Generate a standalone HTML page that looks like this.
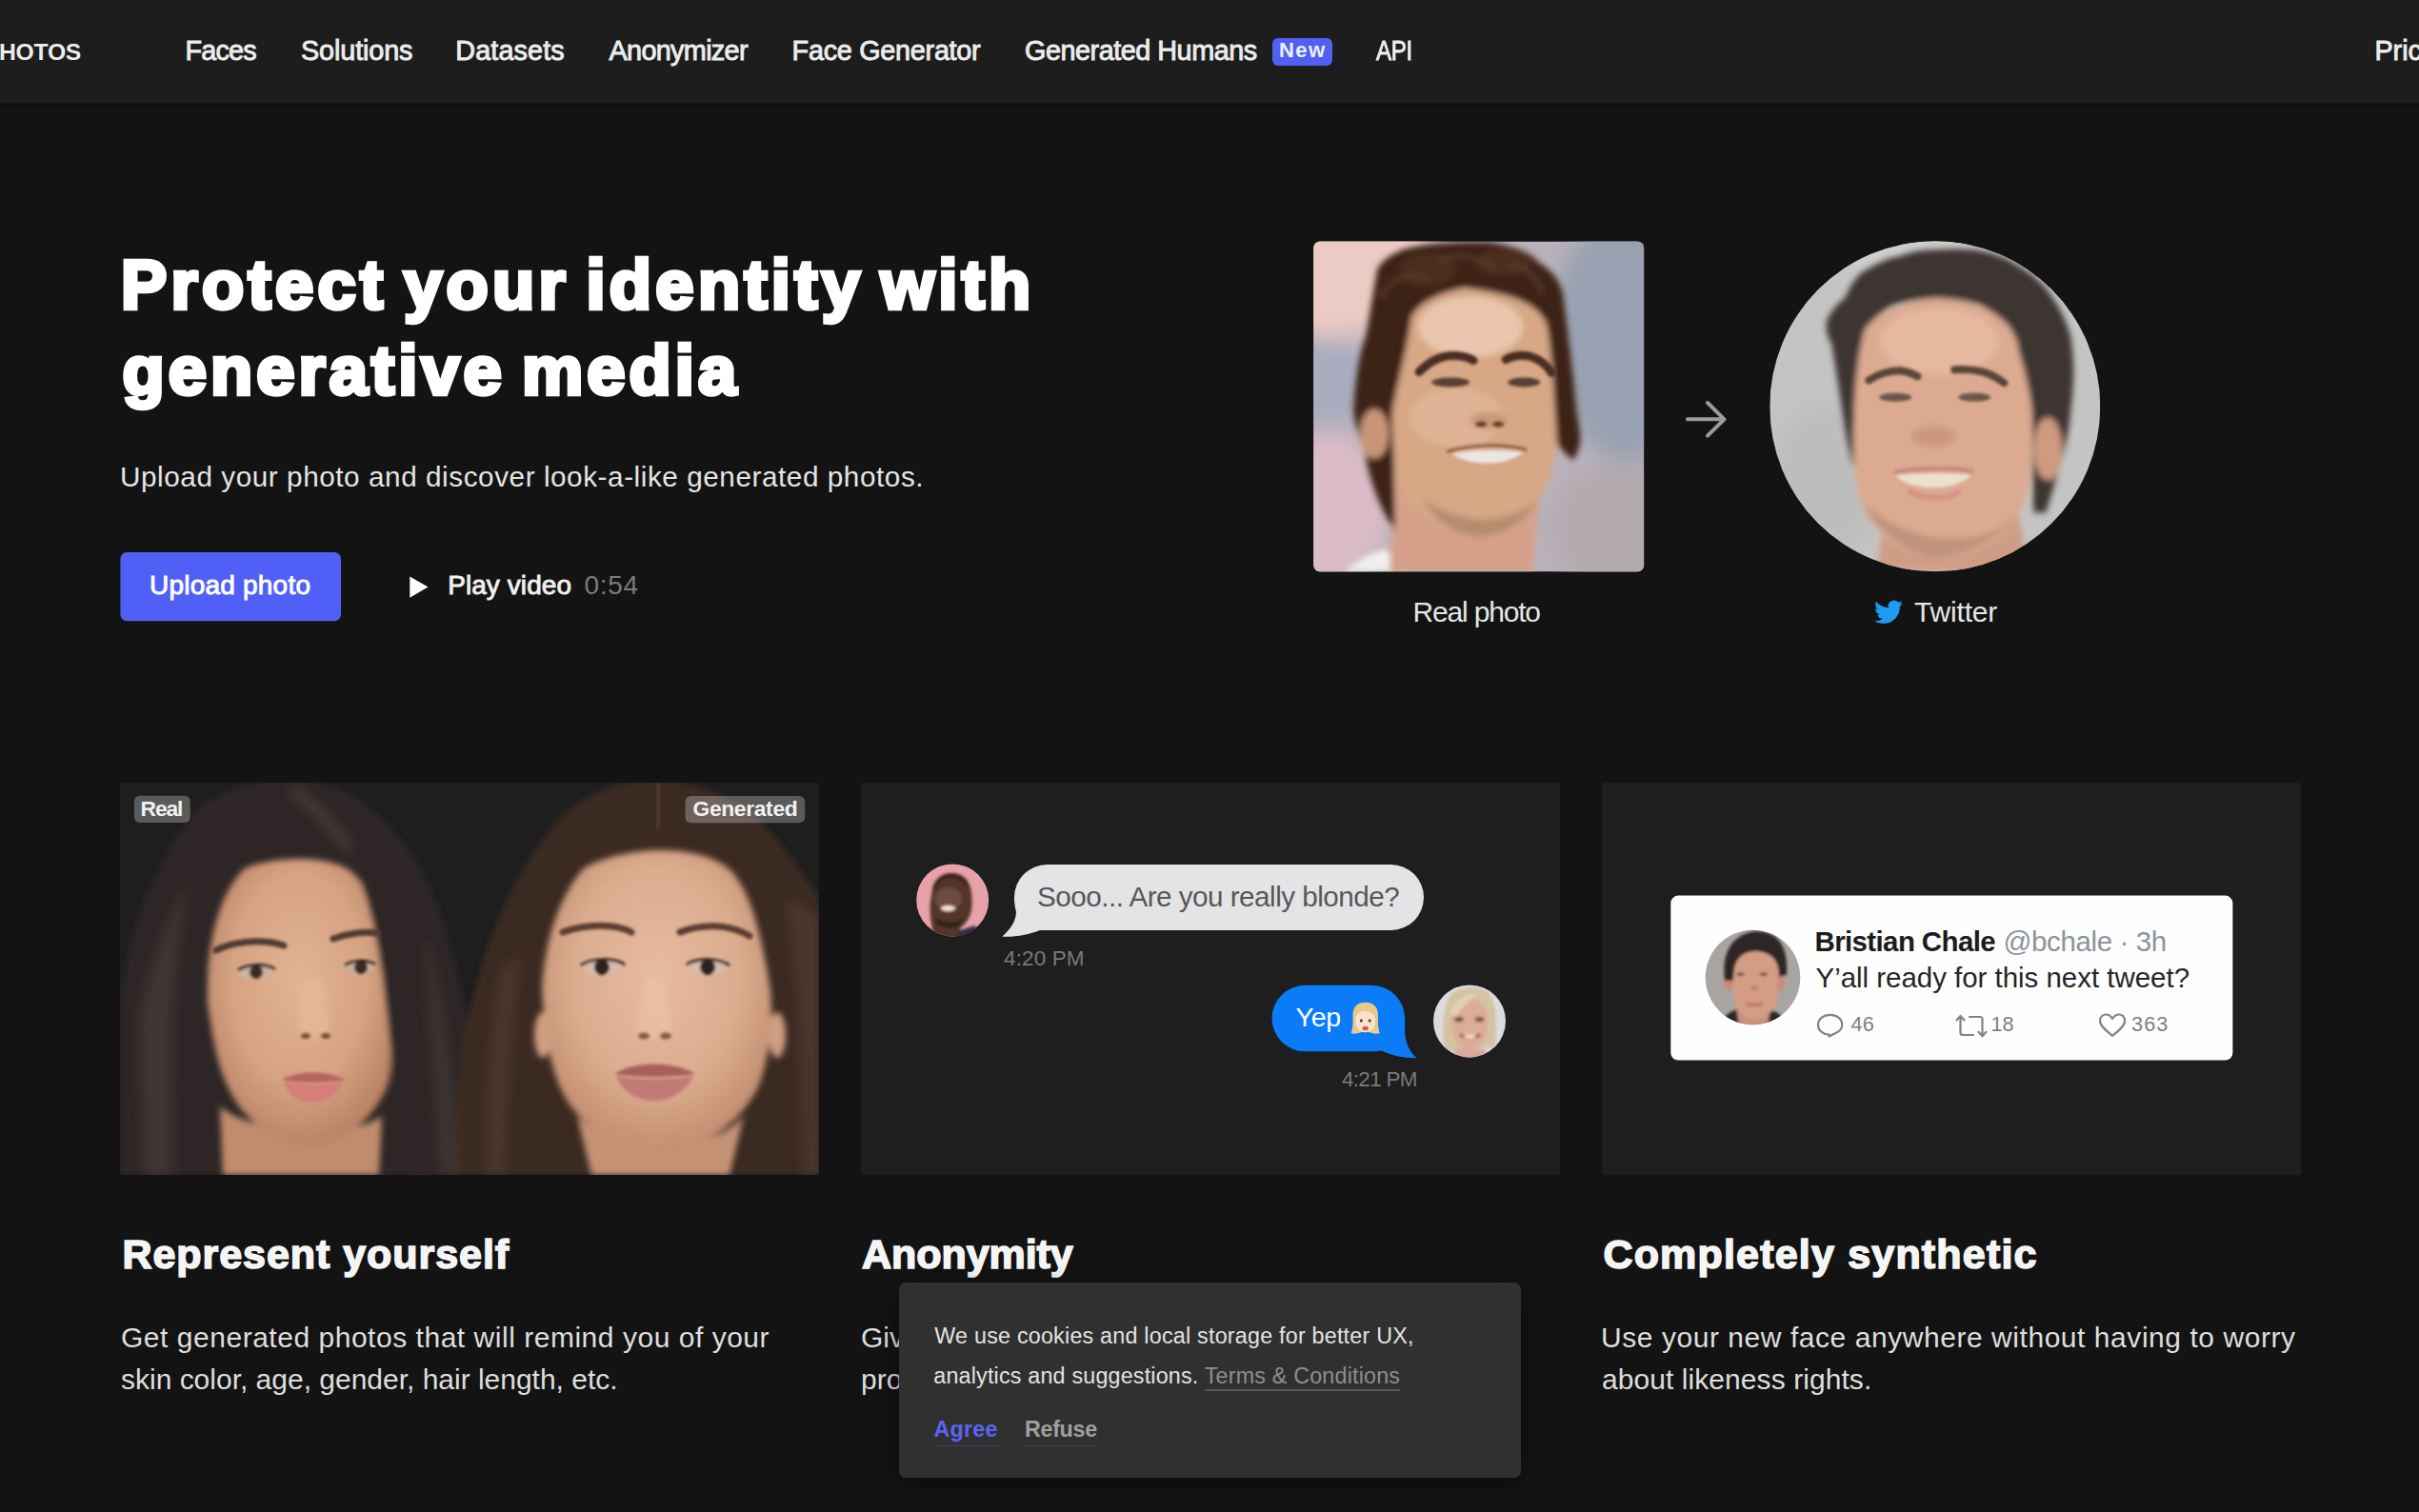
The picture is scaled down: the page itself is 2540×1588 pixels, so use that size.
<!DOCTYPE html>
<html><head><meta charset="utf-8">
<style>
html,body{margin:0;padding:0;}
body{width:2540px;height:1588px;overflow:hidden;background:#131313;position:relative;font-family:"Liberation Sans",sans-serif;}
.t{position:absolute;white-space:nowrap;line-height:1;z-index:5;}
#bg{position:absolute;left:0;top:0;z-index:1;}
</style></head>
<body>
<svg id="bg" width="2540" height="1588" viewBox="0 0 2540 1588">
<defs>
 <filter id="b1" x="-20%" y="-20%" width="140%" height="140%"><feGaussianBlur stdDeviation="1.5"/></filter>
 <filter id="b3" x="-20%" y="-20%" width="140%" height="140%"><feGaussianBlur stdDeviation="3"/></filter>
 <filter id="b6" x="-30%" y="-30%" width="160%" height="160%"><feGaussianBlur stdDeviation="6"/></filter>
 <filter id="b12" x="-50%" y="-50%" width="200%" height="200%"><feGaussianBlur stdDeviation="12"/></filter>
 <linearGradient id="navsh" x1="0" y1="0" x2="0" y2="1"><stop offset="0" stop-color="#000" stop-opacity=".18"/><stop offset="1" stop-color="#000" stop-opacity="0"/></linearGradient>
 <clipPath id="cpReal"><rect x="0" y="0" width="347" height="347" rx="7"/></clipPath>
 <clipPath id="cpTw"><circle cx="173.5" cy="173.5" r="173.5"/></clipPath>
 <clipPath id="cpC1"><rect x="0" y="0" width="734" height="412" rx="3"/></clipPath>
 <linearGradient id="realbg" x1="0" y1="0" x2="1" y2="0.3">
  <stop offset="0" stop-color="#e6c9c6"/><stop offset="0.45" stop-color="#b9b0bb"/><stop offset="1" stop-color="#9ea3b0"/>
 </linearGradient>
 <radialGradient id="twbg" cx="0.5" cy="0.3" r="0.8"><stop offset="0" stop-color="#c9c9c9"/><stop offset="1" stop-color="#b4b4b4"/></radialGradient>
</defs>
<!-- nav -->
<rect x="0" y="0" width="2540" height="108" fill="#1d1d1d"/>
<rect x="0" y="108" width="2540" height="7" fill="url(#navsh)"/>
<!-- New badge -->
<rect x="1336" y="40" width="63" height="29" rx="6" fill="#5060f2"/>
<!-- upload button -->
<rect x="126.4" y="580" width="231.6" height="72.3" rx="7" fill="#5060f6"/>
<!-- play icon -->
<path d="M430.3 605.4 L449.5 616.5 L430.3 627.7 Z" fill="#ffffff"/>

<!-- REAL PHOTO -->
<g transform="translate(1379.2,253.5)" clip-path="url(#cpReal)">
 <rect width="347" height="347" fill="#b9b2bc"/>
 <g filter="url(#b12)">
  <ellipse cx="20" cy="20" rx="110" ry="80" fill="#eccbc4"/>
  <ellipse cx="10" cy="150" rx="60" ry="45" fill="#a9abbf"/>
  <ellipse cx="10" cy="280" rx="70" ry="80" fill="#dcbcc8"/>
  <ellipse cx="330" cy="100" rx="80" ry="130" fill="#98a0b1"/>
  <ellipse cx="320" cy="300" rx="70" ry="70" fill="#b3aaae"/>
 </g>
 <g filter="url(#b3)">
  <path d="M33 347 C45 335 60 328 75 323 L95 347 Z" fill="#f2f0ef"/>
  <path d="M84 240 L240 240 L230 347 L80 347 Z" fill="#d6a08a"/>
  <path d="M89 11 C100 4 140 0 186 1 C210 5 230 12 236 22 C250 30 258 40 262 55 C266 90 272 130 276 177 C280 200 284 215 272 230 L255 213 C252 160 250 110 244 86 C235 66 210 55 158 49 C130 55 110 65 103 80 C98 115 92 145 89 160 C84 190 84 240 86 303 C75 290 60 260 54 222 C46 200 42 185 42 177 C44 140 50 110 55 100 C60 70 64 45 67 29 C72 20 80 15 89 11 Z" fill="#3c2417"/>
  <path d="M103 80 C110 65 130 55 158 49 C210 55 235 66 244 86 C250 110 252 160 256 213 C250 245 245 262 237 270 C225 290 200 306 172 309 C140 306 120 295 115 285 C100 275 90 262 86 256 C84 220 82 190 83 177 C88 150 98 115 103 80 Z" fill="#d7a786"/>
  <ellipse cx="165" cy="90" rx="55" ry="32" fill="#e9c6ad"/>
  <ellipse cx="120" cy="30" rx="30" ry="18" fill="#4e3222" fill-opacity=".8"/>
  <ellipse cx="200" cy="22" rx="30" ry="14" fill="#523424" fill-opacity=".7"/>
  <path d="M70 60 C80 40 100 30 120 40 M130 20 C150 12 175 15 190 30 M205 25 C220 25 235 35 240 55" stroke="#5e4030" stroke-width="5" fill="none" stroke-opacity=".7"/>
  <ellipse cx="150" cy="185" rx="50" ry="30" fill="#e2b99c" fill-opacity=".7"/>
  <ellipse cx="64" cy="202" rx="15" ry="26" fill="#c99577"/>
  <path d="M115 270 C130 300 160 312 180 310 C205 306 225 290 236 270 C220 285 200 292 175 292 C150 290 130 282 115 270 Z" fill="#9f7a62" fill-opacity=".6"/>
  <ellipse cx="184" cy="188" rx="20" ry="9" fill="#c4906f" fill-opacity=".8"/>
 </g>
 <g filter="url(#b1)">
  <path d="M111 137 C122 126 135 120 146 120 C155 120 163 122 168 125" stroke="#4a2e20" stroke-width="9" fill="none" stroke-linecap="round"/>
  <path d="M202 124 C210 120 220 119 228 121 C238 124 245 130 250 138" stroke="#4a2e20" stroke-width="9" fill="none" stroke-linecap="round"/>
  <ellipse cx="144" cy="148" rx="20" ry="5" fill="#5a4034"/>
  <ellipse cx="221" cy="148" rx="17" ry="5" fill="#5a4034"/>
  <ellipse cx="176" cy="192" rx="6" ry="3" fill="#6a4030"/><ellipse cx="194" cy="192" rx="6" ry="3" fill="#6a4030"/>
  <path d="M146 223 C165 219 200 218 220 222 C210 230 195 233 182 233 C167 233 153 229 146 223 Z" fill="#ece6e2"/>
  <path d="M140 221 C165 213 200 212 224 219" stroke="#8a5a48" stroke-width="3" fill="none"/>
 </g>
</g>
<!-- arrow -->
<path d="M1772 440.3 H1810 M1793 423 L1810.5 440.3 L1793 457.6" stroke="#9c9c9c" stroke-width="4" fill="none" stroke-linecap="round" stroke-linejoin="round"/>
<!-- TWITTER PHOTO -->
<g transform="translate(1858.3,253.3)" clip-path="url(#cpTw)">
 <rect width="347" height="347" fill="#c4c4c4"/>
 <g filter="url(#b12)"><ellipse cx="60" cy="250" rx="60" ry="80" fill="#bdbdbd"/><ellipse cx="170" cy="20" rx="90" ry="30" fill="#cfcfcf"/></g>
 <g filter="url(#b3)">
  <path d="M118 305 L262 290 L272 347 L112 347 Z" fill="#d09c86"/>
  <path d="M60 83 C66 70 75 62 79 60 C85 45 92 36 98 32 C115 22 125 17 136 16 C150 10 162 9 172 9 C190 8 205 8 215 9 C235 12 250 18 258 24 C275 34 288 45 294 55 C305 70 312 85 316 100 C320 125 320 150 316 177 C315 210 300 250 290 285 L277 285 C276 250 276 200 275 177 C272 150 265 130 261 115 C255 100 245 85 222 67 C200 62 185 60 172 60 C150 62 130 65 122 72 C110 80 104 88 100 93 C95 110 92 130 89 177 C88 200 88 220 89 240 C84 225 80 205 76 177 C72 150 67 120 65 108 C60 100 58 90 60 83 Z" fill="#3d3532"/>
  <path d="M100 93 C110 80 130 65 172 60 C200 60 230 66 251 89 C258 100 262 110 261 115 C268 135 273 160 275 177 C276 200 275 230 273 256 C268 275 262 285 258 292 C245 310 230 320 222 321 C205 330 190 332 172 332 C150 330 132 322 122 313 C110 300 104 292 100 285 C95 270 90 255 89 242 C88 220 88 200 89 177 C90 140 95 110 100 93 Z" fill="#dcaa91"/>
  <ellipse cx="178" cy="105" rx="62" ry="35" fill="#e5b8a0"/>
  <ellipse cx="292" cy="218" rx="15" ry="33" fill="#cf9a80"/>
  <path d="M100 275 C110 300 135 325 172 332 C215 330 250 305 262 280 C250 300 225 312 200 312 C170 314 130 305 100 275 Z" fill="#a7806c" fill-opacity=".55"/>
  <ellipse cx="172" cy="205" rx="24" ry="11" fill="#c58e75" fill-opacity=".7"/>
 </g>
 <g filter="url(#b1)">
  <path d="M104 146 C115 139 126 136 137 136 C145 137 150 139 155 142" stroke="#5a4438" stroke-width="8" fill="none" stroke-linecap="round"/>
  <path d="M194 135 C205 134 215 135 223 137 C233 140 240 144 246 149" stroke="#5a4438" stroke-width="8" fill="none" stroke-linecap="round"/>
  <ellipse cx="132" cy="164" rx="17" ry="4.5" fill="#6e5548"/>
  <ellipse cx="215" cy="164" rx="17" ry="4.5" fill="#6e5548"/>
  <path d="M130 243 C150 238 195 237 214 242" stroke="#c98c7e" stroke-width="5" fill="none"/>
  <path d="M132 246 C160 243 195 243 212 246 C200 256 185 259 172 259 C155 259 140 255 132 246 Z" fill="#ede0cc"/>
  <path d="M145 262 C160 272 190 272 200 262" stroke="#d39488" stroke-width="6" fill="none"/>
 </g>
</g>
<!-- twitter bird -->
<g transform="translate(1968,627.8) scale(1.25)">
 <path fill="#1d9bf0" d="M23.953 4.57a10 10 0 01-2.825.775 4.958 4.958 0 002.163-2.723c-.951.555-2.005.959-3.127 1.184a4.920 4.920 0 00-8.384 4.482C7.690 8.095 4.067 6.130 1.640 3.162a4.822 4.822 0 00-.666 2.475c0 1.710.870 3.213 2.188 4.096a4.904 4.904 0 01-2.228-.616v.060a4.923 4.923 0 003.946 4.827 4.996 4.996 0 01-2.212.085 4.936 4.936 0 004.604 3.417 9.867 9.867 0 01-6.102 2.105c-.390 0-.779-.023-1.170-.067a13.995 13.995 0 007.557 2.209c9.053 0 13.998-7.496 13.998-13.985 0-.210 0-.420-.015-.630A9.935 9.935 0 0024 4.590z"/>
</g>

<!-- CARD 1 -->
<g transform="translate(126,822)" clip-path="url(#cpC1)">
 <rect width="734" height="412" fill="#1e1e1e"/>
 <defs>
  <radialGradient id="skL" cx="0.5" cy="0.42" r="0.6"><stop offset="0" stop-color="#e2b394"/><stop offset="0.6" stop-color="#d6a384"/><stop offset="1" stop-color="#b98064"/></radialGradient>
  <radialGradient id="skR" cx="0.5" cy="0.42" r="0.6"><stop offset="0" stop-color="#e6bb9f"/><stop offset="0.6" stop-color="#dcac8f"/><stop offset="1" stop-color="#c08a6e"/></radialGradient>
 </defs>
 <g filter="url(#b3)">
  <path d="M0 412 L0 231 C10 160 30 90 82 27 C110 5 150 -5 190 -3 C240 0 290 40 320 100 C345 150 362 220 370 300 C374 350 378 390 379 412 Z" fill="#2f2826"/>
  <path d="M350 412 C352 330 358 260 370 230 C385 160 420 80 470 30 C500 5 540 -5 566 -3 C610 0 650 15 690 60 C715 90 734 122 734 122 L734 412 Z" fill="#3a2a23"/>
 </g>
 <g filter="url(#b6)">
  <path d="M20 250 C30 200 45 150 70 110 C60 170 50 250 55 412 L25 412 Z" fill="#4a403c" fill-opacity=".6"/>
  <path d="M320 160 C340 220 350 300 355 412 L335 412 C330 320 325 240 320 160 Z" fill="#4a403c" fill-opacity=".5"/>
  <path d="M400 200 C390 260 385 330 385 412 L405 412 C405 330 410 260 420 180 Z" fill="#5a443a" fill-opacity=".5"/>
  <path d="M700 120 C712 200 716 300 718 412 L734 412 L734 140 Z" fill="#5a443a" fill-opacity=".5"/>
  <path d="M180 8 C200 20 220 40 240 70" stroke="#5a4c46" stroke-width="10" fill="none" stroke-opacity=".6"/>
 </g>
 <g filter="url(#b3)">
  <path d="M105 340 C140 370 240 375 275 350 L272 412 L108 412 Z" fill="#c08b6e"/>
  <path d="M131 90 C160 78 220 74 245 95 C262 115 270 150 278 218 C284 260 288 300 280 320 C268 350 240 375 204 382 C170 378 145 365 125 340 C108 315 100 290 92 232 C90 180 100 120 131 90 Z" fill="url(#skL)"/>
  <path d="M250 98 C268 140 276 200 282 260 C288 320 295 370 300 412 L330 412 C325 350 310 250 290 160 C280 120 268 100 250 98 Z" fill="#2f2826"/>
  <path d="M480 350 C520 390 620 392 655 350 L640 412 L495 412 Z" fill="#c69276"/>
  <path d="M487 90 C520 70 600 60 639 90 C660 110 672 150 683 218 C686 250 682 290 670 320 C650 360 610 386 566 388 C525 386 490 365 470 335 C455 310 447 280 443 218 C445 170 460 120 487 90 Z" fill="url(#skR)"/>
  <ellipse cx="444" cy="265" rx="9" ry="24" fill="#cf9d80"/>
  <ellipse cx="690" cy="265" rx="9" ry="24" fill="#cf9d80"/>
  <path d="M196 205 C190 230 186 250 188 262 C195 270 212 270 220 262 C222 250 216 230 212 205 Z" fill="#e8bc9c" fill-opacity=".6"/>
  <path d="M552 205 C546 230 542 250 544 262 C551 270 570 270 578 262 C580 250 574 230 568 205 Z" fill="#ecc4a6" fill-opacity=".6"/>
 </g>
 <g filter="url(#b1)">
  <path d="M101 176 C120 166 150 164 172 171" stroke="#4f3a30" stroke-width="7" fill="none" stroke-linecap="round"/>
  <path d="M224 164 C240 158 258 156 270 158" stroke="#4f3a30" stroke-width="7" fill="none" stroke-linecap="round"/>
  <ellipse cx="143" cy="199" rx="19" ry="7" fill="#cdb2a2"/><circle cx="143" cy="199" r="7" fill="#3a2a24"/>
  <path d="M124 197 C135 190 152 190 163 196" stroke="#2a1e1a" stroke-width="3" fill="none"/>
  <ellipse cx="251" cy="194" rx="16" ry="7" fill="#c9ae9e"/><circle cx="253" cy="194" r="7" fill="#3a2a24"/>
  <path d="M236 192 C245 186 258 186 268 191" stroke="#2a1e1a" stroke-width="3" fill="none"/>
  <ellipse cx="195" cy="266" rx="5" ry="3" fill="#7a4a38"/><ellipse cx="216" cy="266" rx="5" ry="3" fill="#7a4a38"/>
  <path d="M170 312 C185 302 220 302 236 312 C220 316 185 316 170 312 Z" fill="#b86460"/>
  <path d="M172 314 C190 318 220 318 234 314 C228 330 212 336 203 336 C190 336 176 330 172 314 Z" fill="#d67e7a"/>
  <path d="M465 157 C490 148 520 148 537 157" stroke="#5a3e32" stroke-width="7" fill="none" stroke-linecap="round"/>
  <path d="M588 157 C610 148 640 148 661 161" stroke="#5a3e32" stroke-width="7" fill="none" stroke-linecap="round"/>
  <ellipse cx="506" cy="194" rx="20" ry="8" fill="#d4bcae"/><circle cx="506" cy="194" r="8" fill="#2e201a"/>
  <path d="M484 192 C495 184 518 184 530 191" stroke="#2a1a14" stroke-width="3" fill="none"/>
  <ellipse cx="617" cy="194" rx="20" ry="8" fill="#d4bcae"/><circle cx="617" cy="194" r="8" fill="#2e201a"/>
  <path d="M595 191 C607 184 628 184 640 192" stroke="#2a1a14" stroke-width="3" fill="none"/>
  <ellipse cx="550" cy="266" rx="6" ry="3.5" fill="#8a5a44"/><ellipse cx="573" cy="266" rx="6" ry="3.5" fill="#8a5a44"/>
  <path d="M519 306 C540 292 582 292 604 306 C580 310 540 310 519 306 Z" fill="#a85e5c"/>
  <path d="M521 308 C540 312 582 312 602 308 C595 326 575 334 561 334 C545 334 527 326 521 308 Z" fill="#c27a76"/>
  <path d="M565 0 V48" stroke="#7a5c4c" stroke-width="2" stroke-opacity=".6"/>
 </g>
 <rect x="14.9" y="13.8" width="58.9" height="28.2" rx="6" fill="#ffffff" fill-opacity="0.27"/>
 <rect x="593.6" y="14.1" width="125.6" height="28.1" rx="6" fill="#ffffff" fill-opacity="0.27"/>
</g>

<!-- CARD 2 -->
<g transform="translate(904,822)">
 <rect width="734" height="412" rx="3" fill="#1e1e1e"/>
</g>
<!-- grey bubble -->
<path d="M1099.5 908 H1460.5 A34.5 34.5 0 0 1 1460.5 977 H1092 C1080 981.5 1066 984.5 1052.3 983.7 C1061 976 1066.5 968 1067 958 C1065.5 952 1065 947 1065 942.5 A34.5 34.5 0 0 1 1099.5 908 Z" fill="#e4e4e6"/>
<!-- blue bubble -->
<path d="M1370.3 1034.8 H1440.3 A34.75 34.75 0 0 1 1475.1 1069.5 V1084 C1475.6 1095 1480 1105 1487.8 1111.2 C1474 1111.5 1461 1108.5 1451 1103.5 C1448 1104 1445 1104.3 1440.3 1104.3 H1370.3 A34.75 34.75 0 0 1 1370.3 1034.8 Z" fill="#0b7bf8"/>
<!-- emoji -->
<g>
 <path d="M1418.5 1085 C1421 1080 1420.5 1072 1420.5 1066 C1420.5 1057 1426 1052.8 1433.7 1052.8 C1441.5 1052.8 1447 1057 1447 1066 C1447 1072 1446.5 1080 1449 1085 C1444 1086.5 1440 1085 1437 1084 L1430 1084 C1427 1085 1423 1086.5 1418.5 1085 Z" fill="#e6c98c"/>
 <ellipse cx="1433.7" cy="1072.5" rx="10.5" ry="11.8" fill="#f9e2cc"/>
 <path d="M1423 1068 C1423 1059 1428 1056.5 1433.7 1056.5 C1440 1056.5 1445 1060 1444.5 1068 C1440 1063 1436 1061 1430 1062 C1427 1063 1425 1065 1423 1068 Z" fill="#e6c98c"/>
 <ellipse cx="1429.3" cy="1072" rx="1.5" ry="1.8" fill="#5a4030"/><ellipse cx="1438.2" cy="1072" rx="1.5" ry="1.8" fill="#5a4030"/>
 <ellipse cx="1433.7" cy="1080" rx="3.2" ry="2.3" fill="#d95a40"/>
</g>
<!-- avatar 1 -->
<g>
 <clipPath id="cpA1"><circle cx="1000.2" cy="945.4" r="38"/></clipPath>
 <g clip-path="url(#cpA1)">
  <rect x="960" y="905" width="82" height="82" fill="#e9a1a9"/>
  <g filter="url(#b1)">
  <path d="M979 975 C975 960 975 935 986 924 C994 916 1008 915 1015 924 C1021 932 1022 950 1019 960 C1016 968 1012 972 1008 975 L1010 990 L980 990 Z" fill="#53352b"/>
  <ellipse cx="996" cy="944" rx="14" ry="12" fill="#6e4c40"/>
  <path d="M983 962 C988 970 1002 972 1011 964 L1008 972 C1000 976 990 975 983 970 Z" fill="#2e2019"/>
  <ellipse cx="995.5" cy="954" rx="7.5" ry="3" fill="#f3e4da"/>
  <path d="M1006 978 L1024 972 L1030 990 L1004 990 Z" fill="#2a2c44"/>
  <path d="M979 940 C978 928 985 918 998 917 C1010 917 1018 925 1020 940 C1016 928 1008 922 998 922 C988 922 982 930 979 940 Z" fill="#3e241c"/>
  </g>
 </g>
</g>
<!-- avatar 2 -->
<g>
 <clipPath id="cpA2"><circle cx="1543" cy="1072.4" r="38"/></clipPath>
 <g clip-path="url(#cpA2)">
  <rect x="1500" y="1030" width="86" height="86" fill="#dcdce0"/>
  <g filter="url(#b1)">
  <path d="M1517 1104 C1514 1085 1514 1055 1525 1043 C1535 1036 1552 1035 1562 1042 C1572 1052 1572 1080 1570 1100 Z" fill="#d4c2a2"/>
  <path d="M1524 1070 C1524 1060 1530 1050 1543 1049 C1556 1049 1562 1060 1562 1072 C1562 1090 1556 1102 1543 1103 C1530 1102 1524 1090 1524 1070 Z" fill="#dcad97"/>
  <path d="M1522 1064 C1526 1050 1540 1042 1553 1043 C1546 1048 1536 1056 1528 1068 Z" fill="#e0d0b2"/>
  <ellipse cx="1532" cy="1070.6" rx="5" ry="2.8" fill="#7a5a48"/>
  <ellipse cx="1553.5" cy="1070.6" rx="5" ry="2.8" fill="#7a5a48"/>
  <path d="M1533 1086 C1538 1092 1549 1092 1554 1086" stroke="#9a5a50" stroke-width="3" fill="none"/>
  <ellipse cx="1543.5" cy="1089" rx="6" ry="2.5" fill="#f0d8c8"/>
  <rect x="1527" y="1102" width="33" height="12" fill="#d9a9a0"/>
  </g>
 </g>
</g>
<!-- CARD 3 -->
<g transform="translate(1682,822)">
 <rect width="734" height="412" rx="3" fill="#1e1e1e"/>
</g>
<!-- tweet card -->
<rect x="1754.3" y="940.6" width="590.1" height="173" rx="8" fill="#fefefe"/>
<g>
 <clipPath id="cpA3"><circle cx="1840.5" cy="1026.5" r="49.8"/></clipPath>
 <g clip-path="url(#cpA3)">
  <rect x="1788" y="974" width="106" height="106" fill="#a9a5a3"/>
  <g filter="url(#b1)">
  <path d="M1806 1080 C1808 1068 1816 1062 1825 1060 L1856 1060 C1866 1062 1874 1068 1878 1080 Z" fill="#2a2625"/>
  <path d="M1822 1050 L1860 1050 L1856 1078 L1826 1078 Z" fill="#c99080"/>
  <path d="M1819 1010 C1819 1000 1828 994 1843 994 C1858 994 1868 1002 1868 1012 L1867 1046 C1864 1062 1855 1070 1843 1070 C1831 1070 1822 1062 1820 1046 Z" fill="#d49b85"/>
  <ellipse cx="1815" cy="1032" rx="5" ry="9" fill="#c98c78"/>
  <ellipse cx="1870" cy="1032" rx="4" ry="9" fill="#c98c78"/>
  <path d="M1811 1030 C1808 1005 1815 982 1843 978 C1866 978 1878 992 1876 1024 L1868 1026 C1868 1010 1862 1000 1843 999 C1828 1000 1820 1008 1820 1030 Z" fill="#2d2826"/>
  <ellipse cx="1827.5" cy="1023" rx="4" ry="1.6" fill="#4a3028"/>
  <ellipse cx="1852" cy="1023" rx="4" ry="1.6" fill="#4a3028"/>
  <path d="M1833 1054 C1838 1056 1846 1056 1851 1054" stroke="#a86a5a" stroke-width="2" fill="none"/>
  <ellipse cx="1842" cy="1038" rx="4" ry="3" fill="#c08672"/>
  </g>
 </g>
</g>
<!-- icons -->
<g fill="none" stroke="#7d848c" stroke-width="2.2" stroke-linejoin="round" stroke-linecap="round">
 <path d="M1921.7 1065.8 C1914.5 1065.8 1909 1070.5 1909 1076.4 C1909 1082 1914 1086.3 1920.5 1086.6 L1920.5 1088.6 L1927.5 1085 C1932 1083 1934.3 1080 1934.3 1076.2 C1934.3 1070.4 1929 1065.8 1921.7 1065.8 Z"/>
 <path d="M2058.5 1067 L2054.5 1071.5 M2058.5 1067 L2062.5 1071.5 M2058.5 1067 V1084.5 C2058.5 1086 2059.5 1087 2061 1087 H2072"/>
 <path d="M2081.5 1088.3 L2077.5 1083.8 M2081.5 1088.3 L2085.5 1083.8 M2081.5 1088.3 V1070.5 C2081.5 1069 2080.5 1068 2079 1068 H2068"/>
 <path d="M2218.1 1087.8 C2210 1081.5 2205 1077 2205 1071.8 C2205 1067.9 2208 1065.5 2211.3 1065.5 C2214.3 1065.5 2216.6 1067.4 2218.1 1070 C2219.6 1067.4 2221.9 1065.5 2224.9 1065.5 C2228.2 1065.5 2231.2 1067.9 2231.2 1071.8 C2231.2 1077 2226.2 1081.5 2218.1 1087.8 Z"/>
</g>

</svg>

<!-- cookie -->
<div id="cookie" style="position:absolute;left:944.1px;top:1347.3px;width:652.5px;height:204.4px;background:#303030;border-radius:7px;box-shadow:0 6px 24px rgba(0,0,0,.45);z-index:10;"></div>
<div style="position:absolute;left:981px;top:1517.5px;width:67px;height:1.5px;background:#3a3f7e;z-index:11;"></div>
<div style="position:absolute;left:1077px;top:1517.5px;width:76px;height:1.5px;background:#454545;z-index:11;"></div>
<div class="t" id="logo" style="left:-1.00px;top:42.68px;font-size:24.7px;font-weight:bold;color:#ececec;letter-spacing:-0.250px;">HOTOS</div>
<div class="t" id="n1" style="left:194.40px;top:39.11px;font-size:28.8px;font-weight:normal;color:#ececec;letter-spacing:-0.800px;-webkit-text-stroke:0.9px #ececec;">Faces</div>
<div class="t" id="n2" style="left:316.00px;top:39.11px;font-size:28.8px;font-weight:normal;color:#ececec;letter-spacing:-0.125px;-webkit-text-stroke:0.9px #ececec;">Solutions</div>
<div class="t" id="n3" style="left:478.30px;top:39.11px;font-size:28.8px;font-weight:normal;color:#ececec;letter-spacing:0.114px;-webkit-text-stroke:0.9px #ececec;">Datasets</div>
<div class="t" id="n4" style="left:639.50px;top:39.11px;font-size:28.8px;font-weight:normal;color:#ececec;letter-spacing:-0.667px;-webkit-text-stroke:0.9px #ececec;">Anonymizer</div>
<div class="t" id="n5" style="left:831.60px;top:39.11px;font-size:28.8px;font-weight:normal;color:#ececec;letter-spacing:-0.277px;-webkit-text-stroke:0.9px #ececec;">Face Generator</div>
<div class="t" id="n6" style="left:1076.00px;top:39.11px;font-size:28.8px;font-weight:normal;color:#ececec;letter-spacing:-0.480px;-webkit-text-stroke:0.9px #ececec;">Generated Humans</div>
<div class="t" id="newt" style="left:1343.00px;top:42.07px;font-size:22px;font-weight:bold;color:#eef0ff;letter-spacing:1.400px;">New</div>
<div class="t" id="n7" style="left:1444.50px;top:38.91px;font-size:28.8px;font-weight:normal;color:#ececec;letter-spacing:-0.500px;transform:scaleX(0.84);transform-origin:0 0;-webkit-text-stroke:0.9px #ececec;">API</div>
<div class="t" id="n8" style="left:2493.40px;top:39.11px;font-size:28.8px;font-weight:normal;color:#ececec;letter-spacing:0.000px;-webkit-text-stroke:0.9px #ececec;">Pricing</div>
<div class="t" id="h1a" style="left:127.00px;top:262.78px;font-size:72.3px;font-weight:bold;color:#ffffff;letter-spacing:4.344px;-webkit-text-stroke:4.4px #fff;word-spacing:-7px;">Protect your identity with</div>
<div class="t" id="h1b" style="left:128.50px;top:353.28px;font-size:72.3px;font-weight:bold;color:#ffffff;letter-spacing:4.067px;-webkit-text-stroke:4.4px #fff;word-spacing:-7px;">generative media</div>
<div class="t" id="sub" style="left:126.00px;top:485.75px;font-size:29.7px;font-weight:normal;color:#e4e4e4;letter-spacing:0.563px;">Upload your photo and discover look-a-like generated photos.</div>
<div class="t" id="btnt" style="left:157.00px;top:601.29px;font-size:28px;font-weight:normal;color:#ffffff;letter-spacing:0.218px;-webkit-text-stroke:0.9px #ffffff;">Upload photo</div>
<div class="t" id="play" style="left:470.20px;top:601.29px;font-size:28px;font-weight:normal;color:#f0f0f0;letter-spacing:0.067px;-webkit-text-stroke:0.9px #f0f0f0;">Play video</div>
<div class="t" id="dur" style="left:613.50px;top:601.29px;font-size:28px;font-weight:normal;color:#7a7a7a;letter-spacing:0.667px;">0:54</div>
<div class="t" id="real" style="left:1483.50px;top:627.60px;font-size:30px;font-weight:normal;color:#e6e6e6;letter-spacing:-1.178px;">Real photo</div>
<div class="t" id="tw" style="left:2010.00px;top:627.60px;font-size:30px;font-weight:normal;color:#e6e6e6;letter-spacing:-0.167px;">Twitter</div>
<div class="t" id="c1h" style="left:128.40px;top:1295.99px;font-size:43px;font-weight:bold;color:#f5f5f5;letter-spacing:0.953px;-webkit-text-stroke:1.6px #f5f5f5;">Represent yourself</div>
<div class="t" id="c2h" style="left:905.00px;top:1295.99px;font-size:43px;font-weight:bold;color:#f5f5f5;letter-spacing:-0.050px;-webkit-text-stroke:1.6px #f5f5f5;">Anonymity</div>
<div class="t" id="c3h" style="left:1683.40px;top:1295.99px;font-size:43px;font-weight:bold;color:#f5f5f5;letter-spacing:1.189px;-webkit-text-stroke:1.6px #f5f5f5;">Completely synthetic</div>
<div class="t" id="c1b1" style="left:127.00px;top:1390.20px;font-size:30px;font-weight:normal;color:#dedede;letter-spacing:0.525px;">Get generated photos that will remind you of your</div>
<div class="t" id="c1b2" style="left:127.00px;top:1434.20px;font-size:30px;font-weight:normal;color:#dedede;letter-spacing:-0.010px;">skin color, age, gender, hair length, etc.</div>
<div class="t" id="c2b1" style="left:904.00px;top:1390.20px;font-size:30px;font-weight:normal;color:#dedede;letter-spacing:0.000px;">Give</div>
<div class="t" id="c2b2" style="left:904.00px;top:1434.20px;font-size:30px;font-weight:normal;color:#dedede;letter-spacing:0.000px;">prov</div>
<div class="t" id="c3b1" style="left:1681.00px;top:1390.20px;font-size:30px;font-weight:normal;color:#dedede;letter-spacing:0.551px;">Use your new face anywhere without having to worry</div>
<div class="t" id="c3b2" style="left:1682.00px;top:1434.20px;font-size:30px;font-weight:normal;color:#dedede;letter-spacing:0.067px;">about likeness rights.</div>
<div class="t" id="k1" style="left:981.30px;top:1392.27px;font-size:23.3px;font-weight:normal;color:#e2e2e2;letter-spacing:0.222px;z-index:11">We use cookies and local storage for better UX,</div>
<div class="t" id="k2" style="left:980.30px;top:1433.77px;font-size:23.3px;font-weight:normal;color:#e2e2e2;letter-spacing:0.191px;z-index:11">analytics and suggestions. <span style="color:#8e8e8e;text-decoration:underline;text-decoration-color:#5a5a5a;text-underline-offset:6px">Terms &amp; Conditions</span></div>
<div class="t" id="agree" style="left:980.50px;top:1489.77px;font-size:23.3px;font-weight:bold;color:#5b64f2;letter-spacing:0.250px;z-index:11">Agree</div>
<div class="t" id="refuse" style="left:1076.00px;top:1489.77px;font-size:23.3px;font-weight:bold;color:#a0a0a0;letter-spacing:-0.320px;z-index:11">Refuse</div>
<div class="t" id="bl1" style="left:1089.00px;top:926.85px;font-size:29.7px;font-weight:normal;color:#575757;letter-spacing:-0.531px;">Sooo... Are you really blonde?</div>
<div class="t" id="tm1" style="left:1054.00px;top:996.25px;font-size:22.5px;font-weight:normal;color:#7a7a7a;letter-spacing:0.133px;">4:20 PM</div>
<div class="t" id="yep" style="left:1360.50px;top:1054.07px;font-size:28.5px;font-weight:normal;color:#ffffff;letter-spacing:-0.200px;">Yep</div>
<div class="t" id="tm2" style="left:1409.00px;top:1122.85px;font-size:22.5px;font-weight:normal;color:#7a7a7a;letter-spacing:-0.700px;">4:21 PM</div>
<div class="t" id="twn" style="left:1905.50px;top:973.92px;font-size:29.5px;font-weight:bold;color:#1c1c1c;letter-spacing:-0.631px;">Bristian Chale</div>
<div class="t" id="twh" style="left:2103.50px;top:973.92px;font-size:29.5px;font-weight:normal;color:#8b939b;letter-spacing:-0.382px;">@bchale · 3h</div>
<div class="t" id="twt" style="left:1906.50px;top:1011.72px;font-size:29.5px;font-weight:normal;color:#262626;letter-spacing:-0.032px;">Y’all ready for this next tweet?</div>
<div class="t" id="cnt1" style="left:1943.50px;top:1065.42px;font-size:21.7px;font-weight:normal;color:#7b828a;letter-spacing:0.200px;">46</div>
<div class="t" id="cnt2" style="left:2090.50px;top:1065.42px;font-size:21.7px;font-weight:normal;color:#7b828a;letter-spacing:0.000px;">18</div>
<div class="t" id="cnt3" style="left:2238.00px;top:1065.42px;font-size:21.7px;font-weight:normal;color:#7b828a;letter-spacing:1.100px;">363</div>
<div class="t" id="bdr" style="left:147.50px;top:837.79px;font-size:22.8px;font-weight:bold;color:#f2f2f2;letter-spacing:-1.067px;">Real</div>
<div class="t" id="bdg" style="left:727.50px;top:837.99px;font-size:22.8px;font-weight:bold;color:#f2f2f2;letter-spacing:-0.325px;">Generated</div>
</body></html>
